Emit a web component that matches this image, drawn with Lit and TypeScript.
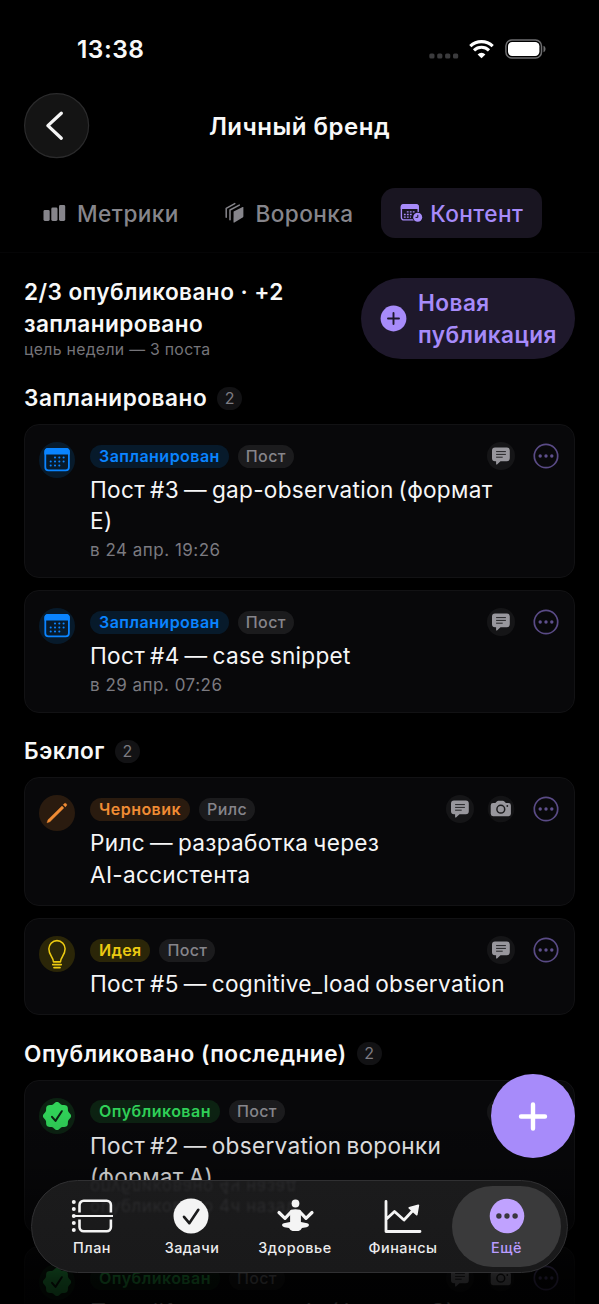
import { LitElement, html, svg, css, nothing } from "lit";
import { customElement, property } from "lit/decorators.js";
import { classMap } from "lit/directives/class-map.js";

type Kind = "planned" | "draft" | "idea" | "done";

interface Post {
  kind: Kind;
  format: string;
  lines: string[];
  meta?: string;
  camera?: boolean;
}

interface Section {
  title: string;
  posts: Post[];
}

const LABELS: Record<Kind, string> = {
  planned: "Запланирован",
  draft: "Черновик",
  idea: "Идея",
  done: "Опубликован",
};

const SECTIONS: Section[] = [
  {
    title: "Запланировано",
    posts: [
      { kind: "planned", format: "Пост", lines: ["Пост #3 — gap-observation (формат", "E)"], meta: "в 24 апр. 19:26" },
      { kind: "planned", format: "Пост", lines: ["Пост #4 — case snippet"], meta: "в 29 апр. 07:26" },
    ],
  },
  {
    title: "Бэклог",
    posts: [
      { kind: "draft", format: "Рилс", lines: ["Рилс — разработка через", "AI-ассистента"], camera: true },
      { kind: "idea", format: "Пост", lines: ["Пост #5 — cognitive_load observation"] },
    ],
  },
  {
    title: "Опубликовано (последние)",
    posts: [
      { kind: "done", format: "Пост", lines: ["Пост #2 — observation воронки", "(формат A)"], meta: "опубликовано 4ч назад" },
      { kind: "done", format: "Пост", lines: ["Пост #1 — case study (формат C)"], camera: true },
    ],
  },
];

const sealPoints = (() => {
  let d = "";
  const n = 8;
  for (let i = 0; i <= 96; i++) {
    const a = (i / 96) * Math.PI * 2;
    const r = 13.1 + 1.0 * Math.cos(n * a);
    d += `${i ? "L" : "M"}${(18 + r * Math.sin(a)).toFixed(2)} ${(18 - r * Math.cos(a)).toFixed(2)}`;
  }
  return d + "Z";
})();

const calendarDots = [
  [16, 15.5], [20.3, 15.5], [24.6, 15.5],
  [11.7, 19.5], [16, 19.5], [20.3, 19.5], [24.6, 19.5],
  [11.7, 23.5], [16, 23.5], [20.3, 23.5],
];

const kindIcon = (kind: Kind) => {
  switch (kind) {
    case "planned":
      return svg`<rect x="6.3" y="7" width="23.6" height="21.4" rx="3.2" fill="none" stroke="currentColor" stroke-width="1.8"/>
        <path d="M5.4 12.6V9.6a3.6 3.6 0 0 1 3.6-3.5h18.200a3.600 3.600 0 0 1 3.600 3.500v3z" fill="currentColor"/>
        ${calendarDots.map(([x, y]) => svg`<circle cx=${x} cy=${y} r="1.05" fill="currentColor"/>`)}`;
    case "draft":
      return svg`<path d="M8 27.800l1-3L23 11l1.900 1.900L10.900 26.800z" fill="currentColor" stroke="currentColor" stroke-width=".4" stroke-linejoin="round"/>
        <path d="M24.200 9.700l.9-.9a1.500 1.500 0 0 1 2.200 2.200l-.9.900z" fill="currentColor" stroke="currentColor" stroke-width=".4"/>`;
    case "idea":
      return svg`<path d="M14 25.500c-.2-5-5.100-6.500-5.100-13a9.100 8.100 0 0 1 18.200 0c0 6.500-4.900 8-5.100 13z" transform="translate(1.900 .3) scale(.893 1)" fill="none" stroke="currentColor" stroke-width="1.700" stroke-linejoin="round"/>
        <path d="M13.800 28.600h8.400M15 31.600h6" stroke="currentColor" stroke-width="1.700" stroke-linecap="round"/>`;
    case "done":
      return svg`<path d=${sealPoints} fill="currentColor"/>
        <path d="M13 18.800l3.500 4.100 6.300-9.700" fill="none" stroke="#0a2211" stroke-width="2" stroke-linecap="round" stroke-linejoin="round"/>`;
  }
};

const comment = html`<svg class="round" viewBox="0 0 28 28">
  <circle cx="14" cy="14" r="14" fill="#151517"/>
  <path d="M8 5.500h11.800a3 3 0 0 1 3 3v7.800a3 3 0 0 1-3 3h-6.300l-3.500 3.100c-.5.400-.9.200-.9-.4v-2.700H8a3 3 0 0 1-3-3V8.500a3 3 0 0 1 3-3z" fill="#98979d"/>
  <path d="M9.500 9.600h9M9.500 12.400h9M9.500 15.200h5.800" stroke="#242426" stroke-width="1" stroke-linecap="round"/>
</svg>`;

const camera = html`<svg class="round" viewBox="0 0 28 28">
  <circle cx="14" cy="14" r="13.300" fill="#131315"/>
  <path d="M6.100 8.100h2.200l1.500-1.700c.5-.5.900-.7 1.600-.7h4.400c.7 0 1.100.2 1.600.7l1.500 1.700h2.600a2.400 2.400 0 0 1 2.400 2.400v8.300a2.400 2.400 0 0 1-2.400 2.400H6.100a2.400 2.400 0 0 1-2.400-2.400v-8.300a2.400 2.400 0 0 1 2.400-2.400z" fill="#98979d"/>
  <circle cx="13.800" cy="14.200" r="3.900" fill="none" stroke="#1c1c1e" stroke-width="1.500"/>
  <circle cx="20.300" cy="11" r=".9" fill="#1c1c1e"/>
</svg>`;

const more = html`<svg class="more" viewBox="0 0 26 26">
  <circle cx="13" cy="13" r="11.700" fill="none" stroke="#5a4b86" stroke-width="1.700"/>
  <circle cx="7.200" cy="13" r="1.700" fill="#5f508d"/><circle cx="13" cy="13" r="1.700" fill="#5f508d"/><circle cx="18.800" cy="13" r="1.700" fill="#5f508d"/>
</svg>`;

@customElement("post-card")
export class PostCard extends LitElement {
  @property({ attribute: false }) post!: Post;

  static styles = css`
    :host { display: block; }
    .card {
      box-sizing: border-box;
      display: flex;
      gap: 15px;
      padding: 17px 15.500px 15px 14px;
      border: 1px solid #121214;
      border-radius: 15px;
      background: #08080a;
    }
    .kind { flex: none; width: 36px; height: 36px; border-radius: 50%; }
    .kind svg { display: block; width: 36px; height: 36px; overflow: visible; }
    .body { flex: 1; min-width: 0; }
    .row { display: flex; align-items: center; height: 28px; }
    .tag {
      box-sizing: border-box;
      height: 23px;
      line-height: 23px;
      padding: 0 9px;
      border-radius: 12px;
      font-size: 16px;
      white-space: nowrap;
    }
    .status { font-weight: 600; text-align: center; margin-right: 9px; }
    .format { background: #1b1b1d; color: #86858b; font-weight: 500; padding: 0 8px; letter-spacing: .35px; }
    .grow { flex: 1; }
    .round { width: 28px; height: 28px; margin-left: 13px; }
    .more { width: 26px; height: 26px; margin-left: 18px; }
    .planned { color: #0a84ff; background: #071a2b; }
    .draft { color: #f08c34; background: #2a1b0f; }
    .idea { color: #ecca12; background: #2b2608; }
    .done { color: #30d158; background: #0c2212; }
    .status.planned { letter-spacing: .47px; }
    .status.draft { letter-spacing: .47px; }
    .status.idea { letter-spacing: .3px; }
    .status.done { letter-spacing: .47px; }
    .title {
      margin-top: 3.600px;
      font-size: 22.600px;
      line-height: 31.500px;
      letter-spacing: .3px;
      word-spacing: -1.600px;
      color: #f6f6f7;
      white-space: nowrap;
    }
    .meta { margin-top: 1.500px; height: 24px; line-height: 24px; font-size: 17px; color: #7b7a80; letter-spacing: .5px; }
  `;

  render() {
    const p = this.post;
    return html`<article class="card">
      <div class=${classMap({ kind: true, [p.kind]: true })}><svg viewBox="0 0 36 36">${kindIcon(p.kind)}</svg></div>
      <div class="body">
        <div class="row">
          <span class=${classMap({ tag: true, status: true, [p.kind]: true })}>${LABELS[p.kind]}</span>
          <span class="tag format">${p.format}</span>
          <span class="grow"></span>
          ${comment}${p.camera ? camera : nothing}${more}
        </div>
        <div class="title">${p.lines.map((l) => html`<div>${l}</div>`)}</div>
        ${p.meta ? html`<div class="meta">${p.meta}</div>` : nothing}
      </div>
    </article>`;
  }
}

@customElement("app-root")
export class AppRoot extends LitElement {
  static styles = css`
    :host {
      display: block;
      position: relative;
      width: 599px;
      height: 1304px;
      overflow: hidden;
      background: #000;
      color: #f8f8f8;
      font-family: Inter, "Noto Sans", sans-serif;
    }
    svg { display: block; }
    .statusbar { display: flex; align-items: center; height: 93px; padding: 5px 53px 0 77px; box-sizing: border-box; }
    .time { flex: 1; font-size: 24.500px; font-weight: 600; letter-spacing: .5px; }
    .signal { margin-top: 13px; margin-right: 10px; }
    .wifi { margin-right: 11px; }
    .top { display: grid; grid-template-columns: 66px 1fr 66px; align-items: center; padding: 0 24px; height: 66px; }
    .title { text-align: center; font-size: 24px; font-weight: 600; letter-spacing: .5px; }
    .tabs { display: flex; gap: 9px; padding: 29px 24px 14px; border-bottom: 1px solid #050506; }
    .tab { display: flex; align-items: center; height: 50px; box-sizing: border-box; padding: 0 18.500px 0 19px; gap: 11px; border-radius: 14px; font-size: 22.600px; font-weight: 500; letter-spacing: .45px; color: #86858b; white-space: nowrap; }
    .tab.on { background: #191521; color: #a78bfa; gap: 7px; }
    .summary { display: flex; justify-content: space-between; padding: 25px 24px 0; height: 106.500px; box-sizing: border-box; }
    .text { margin-top: -2px; }
    .goal { font-size: 22.600px; line-height: 31.500px; font-weight: 600; letter-spacing: .42px; white-space: nowrap; }
    .hint { font-size: 15.800px; line-height: 21px; color: #757479; letter-spacing: .3px; }
    .new { display: flex; align-items: center; gap: 11px; box-sizing: border-box; width: 214px; height: 81px; padding: 0 0 0 19px; border-radius: 41px; background: #1e182b; color: #a78bfa; font-size: 22.600px; line-height: 31.400px; font-weight: 600; letter-spacing: .45px; }
    .head { display: flex; align-items: center; gap: 10px; height: 28px; padding: 24.500px 24px 12px; }
    .head h2 { margin: 0; font-size: 22.600px; font-weight: 600; line-height: 28px; letter-spacing: .52px; }
    .count { width: 25px; height: 23px; border-radius: 12px; background: #121214; color: #7d7c82; font-size: 16px; line-height: 23px; text-align: center; }
    .list { display: flex; flex-direction: column; gap: 12.300px; padding: 0 24px; }
    .fade { position: absolute; inset: 1110px 0 0 0; background: linear-gradient(to bottom, rgba(0,0,0,0) 0%, rgba(0,0,0,.16) 28%, rgba(0,0,0,.6) 65%, rgba(0,0,0,.81) 87%, rgba(0,0,0,.87) 100%); }
    .fab { position: absolute; left: 491px; top: 1074px; width: 84px; height: 84px; border-radius: 50%; background: #a78bfa; }
    .nav { position: absolute; left: 31px; top: 1180px; width: 537px; height: 93px; box-sizing: border-box; border: 1px solid #303032; border-radius: 47px; background: linear-gradient(#1b1b1c, #19191a); display: flex; padding: 5px 6px; overflow: hidden; }
    .ghost { position: absolute; left: 58px; font-size: 17px; line-height: 24px; letter-spacing: .5px; color: #2b2b2d; filter: blur(.8px); white-space: nowrap; }
    .ghost.low { top: 13px; }
    .ghost.high { top: -6px; transform: scaleY(-1); color: #29292b; }
    .item { position: relative; display: flex; flex-direction: column; align-items: center; box-sizing: border-box; padding-top: 10px; font-size: 14.400px; font-weight: 500; line-height: 18px; letter-spacing: .5px; color: #ececed; white-space: nowrap; }
    .item svg { width: 44px; height: 40px; margin-bottom: 3px; overflow: visible; }
    .w1 { width: 108px; } .w2 { width: 92px; } .w3 { width: 114px; } .w4 { width: 102px; }
    .item.on { width: 109px; height: 81px; border-radius: 41px; background: #3a3a3b; color: #b99cff; margin-left: -2px; }
  `;

  render() {
    return html`
      <div class="statusbar">
        <span class="time">13:38</span>
        <svg class="signal" width="30" height="6" viewBox="0 0 30 6" fill="#3b3b3d">
          ${[0.3, 8.2, 16.1, 24].map((x) => svg`<rect x=${x} y=".5" width="5.200" height="5" rx="1.600"/>`)}
        </svg>
        <svg class="wifi" width="25" height="19" viewBox="0 0 25 19" fill="none" stroke="#fff">
          <path d="M1.300 6.200a16 16 0 0 1 22.400 0M5 10.300a10.800 10.800 0 0 1 15 0" stroke-width="3.100"/>
          <path d="M12.500 18.300l-3.900-3.900a5.700 5.700 0 0 1 7.800 0z" fill="#fff" stroke="none"/>
        </svg>
        <svg width="41" height="20" viewBox="0 0 41 20">
          <rect x=".9" y=".9" width="35.600" height="18.200" rx="6" fill="none" stroke="#6e6e70" stroke-width="1.500"/>
          <rect x="3" y="3" width="31.400" height="14" rx="4.200" fill="#fff"/>
          <path d="M38.500 6.800c2.700 1 2.700 5.400 0 6.400z" fill="#6e6e70"/>
        </svg>
      </div>
      <header class="top">
        <svg width="66" height="66" viewBox="0 0 66 66"><circle cx="32.600" cy="32.600" r="32" fill="#141414" stroke="#2b2b2c" stroke-width="1.200"/>
          <path d="M37.300 20.200L23.900 32.600l13.400 12.600" fill="none" stroke="#f5f5f5" stroke-width="3.300" stroke-linecap="round" stroke-linejoin="round"/></svg>
        <div class="title">Личный бренд</div>
      </header>
      <nav class="tabs">
        <div class="tab">
          <svg width="23" height="18" viewBox="0 0 23 18" fill="currentColor"><rect x=".5" y="6" width="6.200" height="11" rx="1.400"/><rect x="8.300" y="3.500" width="6.200" height="13.500" rx="1.400"/><rect x="16" y="1" width="6.200" height="16" rx="1.400"/></svg>
          <span>Метрики</span>
        </div>
        <div class="tab">
          <svg width="19" height="22" viewBox="0 0 19 22"><path d="M8.600 9.600L17.600 5q.8-.4.800.5v8.700q0 .9-.8 1.400l-8.200 4.900q-.9.500-.9-.5z" fill="currentColor"/><path d="M5 17V7.300L14.300 2.400M1.200 14.500V5.600L9.800.9" transform="translate(0 .7)" fill="none" stroke="currentColor" stroke-width="1.500" stroke-linecap="round" stroke-linejoin="round"/></svg>
          <span>Воронка</span>
        </div>
        <div class="tab on">
          <svg width="23" height="20" viewBox="0 0 23 20"><rect x="1.400" y="1.900" width="16.800" height="15" rx="2.500" fill="none" stroke="currentColor" stroke-width="1.400"/><path d="M.7 6V3.800A2.800 2.800 0 0 1 3.500 1h12.600a2.800 2.800 0 0 1 2.800 2.800V6z" fill="currentColor"/>
            <path d="M6.800 8.800h9M3.900 11.500h9M3.900 14.200h7" stroke="currentColor" stroke-width="1.300" stroke-dasharray="1.800 1.200"/>
            <circle cx="17.700" cy="14.200" r="5.400" fill="#191521"/><circle cx="17.700" cy="14.200" r="4.500" fill="currentColor"/><path d="M17.800 11.800v2.600h-2.300" fill="none" stroke="#191521" stroke-width="1"/></svg>
          <span>Контент</span>
        </div>
      </nav>
      <section class="summary">
        <div class="text">
          <div class="goal">2/3 опубликовано · +2<br />запланировано</div>
          <div class="hint">цель недели — 3 поста</div>
        </div>
        <div class="new">
          <svg width="27" height="27" viewBox="0 0 27 27"><circle cx="13.500" cy="13.500" r="12.900" fill="currentColor"/><path d="M8 13.500h11M13.500 8v11" stroke="#1e182b" stroke-width="1.900" stroke-linecap="round"/></svg>
          <span>Новая<br />публикация</span>
        </div>
      </section>
      ${SECTIONS.map((s) => html`
        <div class="head"><h2>${s.title}</h2><span class="count">${2}</span></div>
        <div class="list">${s.posts.map((p) => html`<post-card .post=${p}></post-card>`)}</div>`)}
      <div class="fade"></div>
      <div class="fab"><svg viewBox="0 0 84 84"><path d="M42 30.500v24M30 42.500h24" stroke="#fff" stroke-width="4.400" stroke-linecap="round"/></svg></div>
      <nav class="nav">
        <span class="ghost high" aria-hidden="true">опубликовано 4ч назад</span>
        <span class="ghost low" aria-hidden="true">опубликовано 4ч назад</span>
        <div class="item w1">
          <svg viewBox="0 0 44 40" fill="none" stroke="#f4f4f4" stroke-width="2.600"><path d="M9.500 16.600V9a4.200 4.200 0 0 1 4.200-4.200h23a4.200 4.200 0 0 1 4.200 4.200v7.600M9.500 23.400V31a4.200 4.200 0 0 0 4.200 4.200h23A4.200 4.200 0 0 0 40.900 31v-7.600"/><path d="M3 20h40" stroke-width="2"/>
            <g fill="#f4f4f4" stroke="none">${[6, 13, 20, 27, 34].map((y) => svg`<circle cx="3.800" cy=${y} r="2"/>`)}</g></svg>
          <span>План</span>
        </div>
        <div class="item w2">
          <svg viewBox="0 0 44 40"><circle cx="21" cy="20" r="17.500" fill="#f4f4f4"/><path d="M14 20.800l5.300 6.400 9-13.400" fill="none" stroke="#1b1b1c" stroke-width="2.600" stroke-linecap="round" stroke-linejoin="round"/></svg>
          <span>Задачи</span>
        </div>
        <div class="item w3">
          <svg viewBox="0 0 44 40" fill="#f4f4f4"><circle cx="22.500" cy="7.500" r="3.900"/>
            <path d="M18 16l-6 6.300-6-5.800M27 16l6 6.300 6-5.800" fill="none" stroke="#f4f4f4" stroke-width="3.200" stroke-linecap="round" stroke-linejoin="round"/>
            <path d="M18 13.800q4.500-1 9 0 1 .6.900 2V26l6.300 1.200q2.200.5 1.700 2.400-.4 1.300-2.400 1.600l-4.500.9q-1.500 3-3.500 3h-6q-2 0-3.500-3l-4.500-.9q-2-.3-2.400-1.600-.5-1.900 1.700-2.400l6.300-1.200V15.800q-.1-1.400.9-2z"/></svg>
          <span>Здоровье</span>
        </div>
        <div class="item w4">
          <svg viewBox="0 0 44 40" fill="none" stroke="#f4f4f4" stroke-width="2.800" stroke-linecap="round" stroke-linejoin="round"><path d="M5 5.500v30h34M5.500 23l8-7.500 9.500 8.500 10.500-11.200"/><path d="M28.300 11.800l9-2.500-1.600 9.300z" fill="#f4f4f4" stroke-width="1.800"/></svg>
          <span>Финансы</span>
        </div>
        <div class="item on">
          <svg viewBox="0 0 44 40"><circle cx="22" cy="20" r="17.300" fill="#c0a2ff"/><g fill="#39363f"><circle cx="13.900" cy="20" r="2.700"/><circle cx="22" cy="20" r="2.700"/><circle cx="30.100" cy="20" r="2.700"/></g></svg>
          <span>Ещё</span>
        </div>
      </nav>
    `;
  }
}
